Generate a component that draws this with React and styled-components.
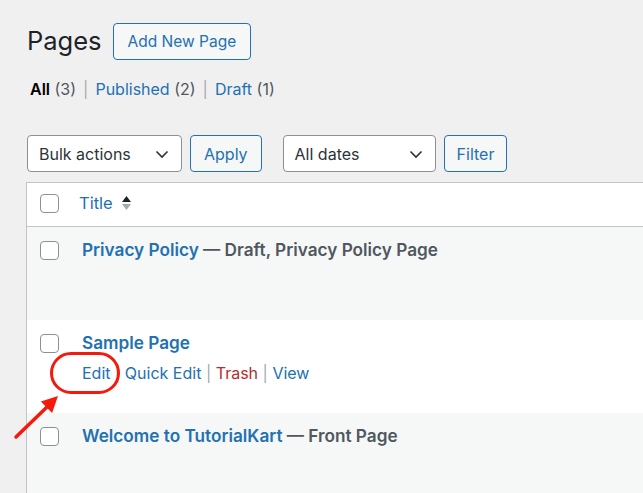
import React from 'react';
import styled, { createGlobalStyle } from 'styled-components';

const GlobalStyle = createGlobalStyle`
  html, body {
    margin: 0;
    padding: 0;
    background: #f0f0f1;
    overflow: hidden;
  }
  body {
    font-family: Inter, "Liberation Sans", sans-serif;
    color: #3c434a;
  }
`;

const Page = styled.div`
  width: 643px;
  height: 493px;
  overflow: hidden;
  padding: 22px 0 0 27px;
  box-sizing: border-box;
`;

const Header = styled.div`
  display: flex;
  align-items: center;
  gap: 11px;
`;

const Heading = styled.h1`
  margin: 0;
  font-size: 25.5px;
  font-weight: 400;
  color: #1d2327;
  line-height: 38px;
`;

const OutlineButton = styled.button`
  font-family: inherit;
  font-size: ${({ size }) => size || 16}px;
  color: #2271b1;
  background: #f6f7f7;
  border: 1px solid #2271b1;
  border-radius: 4px;
  height: 37px;
  padding: 0 ${({ pad }) => pad || 12}px;
  cursor: pointer;
`;

const Views = styled.ul`
  display: flex;
  list-style: none;
  margin: 19px 0 0 3px;
  padding: 0;
  font-size: 16px;
  color: #50575e;
`;

const ViewItem = styled.li`
  a {
    color: ${({ current }) => (current ? '#000' : '#2271b1')};
    font-weight: ${({ current }) => (current ? 600 : 400)};
    text-decoration: none;
  }
`;

const Sep = styled.span`
  color: #a7aaad;
  margin: 0 7px;
`;

const TableNav = styled.div`
  display: flex;
  align-items: center;
  margin-top: 36px;
`;

const Group = styled.div`
  display: flex;
  gap: 8px;
  margin-right: 21px;
`;

const Select = styled.div`
  width: ${({ w }) => w}px;
  height: 37px;
  box-sizing: border-box;
  border: 1px solid #8c8f94;
  border-radius: 4px;
  background: #fff;
  display: flex;
  align-items: center;
  justify-content: space-between;
  padding: 0 11px 0 11px;
  font-size: 16px;
  color: #2c3338;
`;

const Table = styled.div`
  width: 700px;
  margin: 10px 0 0 -1px;
  border: 1px solid #c3c4c7;
  background: #fff;
`;

const HeadRow = styled.div`
  display: flex;
  align-items: center;
  height: 44px;
  padding-bottom: 3px;
  box-sizing: border-box;
  border-bottom: 1px solid #c3c4c7;
  background: #fff;
`;

const Row = styled.div`
  position: relative;
  display: flex;
  align-items: flex-start;
  height: ${({ h }) => h}px;
  background: ${({ striped }) => (striped ? '#f6f7f7' : '#fff')};
  box-sizing: border-box;
  padding-top: 14px;
`;

const CheckCell = styled.div`
  width: 55px;
  padding-left: 13px;
  box-sizing: border-box;
  flex: none;
`;

const Checkbox = styled.span`
  display: block;
  width: 19px;
  height: 19px;
  box-sizing: border-box;
  border: 1px solid #8c8f94;
  border-radius: 4px;
  background: #fff;
`;

const SortLink = styled.a`
  display: flex;
  align-items: center;
  gap: 8px;
  color: #2271b1;
  font-size: 16.5px;
  margin-left: -3px;
`;

const TitleCell = styled.div`
  margin-top: -1px;
`;

const RowTitle = styled.div`
  font-size: 17.2px;
  font-weight: 600;
  color: #50575e;
  line-height: 20px;
  a {
    color: #2271b1;
    text-decoration: none;
  }
`;

const Actions = styled.div`
  margin-top: 10px;
  font-size: 16px;
  color: #a7aaad;
  a {
    color: #2271b1;
    text-decoration: none;
  }
  a.trash {
    color: #b32d2e;
  }
`;

const Circle = styled.div`
  position: absolute;
  left: 23px;
  top: 32px;
  width: 70px;
  height: 42px;
  box-sizing: border-box;
  border: 3px solid #f41a0c;
  border-radius: 21px;
  z-index: 2;
`;

const Arrow = styled.svg`
  position: absolute;
  left: -27px;
  top: 65px;
  z-index: 2;
`;

const Chevron = () => (
  <svg width="16" height="16" viewBox="0 0 16 16">
    <path d="M2.5 5.5 L8 11 L13.5 5.5" fill="none" stroke="#2c3338" strokeWidth="1.6" />
  </svg>
);

const SortIcon = () => (
  <svg width="11" height="18" viewBox="0 0 11 18">
    <path d="M5.5 2 L10 8 L1 8 Z" fill="#1d2327" />
    <path d="M1 10 L10 10 L5.5 16 Z" fill="#a7aaad" />
  </svg>
);

export default function App() {
  return (
    <Page>
      <GlobalStyle />
      <Header>
        <Heading>Pages</Heading>
        <OutlineButton pad={14} size={15.5}>Add New Page</OutlineButton>
      </Header>
      <Views>
        <ViewItem current><a>All</a> (3)<Sep>|</Sep></ViewItem>
        <ViewItem><a>Published</a> (2)<Sep>|</Sep></ViewItem>
        <ViewItem><a>Draft</a> (1)</ViewItem>
      </Views>
      <TableNav>
        <Group>
          <Select w={155}>Bulk actions <Chevron /></Select>
          <OutlineButton pad={13}>Apply</OutlineButton>
        </Group>
        <Group>
          <Select w={153}>All dates <Chevron /></Select>
          <OutlineButton pad={12}>Filter</OutlineButton>
        </Group>
      </TableNav>
      <Table>
        <HeadRow>
          <CheckCell><Checkbox /></CheckCell>
          <SortLink>Title <SortIcon /></SortLink>
        </HeadRow>
        <Row striped h={93}>
          <CheckCell><Checkbox /></CheckCell>
          <TitleCell>
            <RowTitle><a>Privacy Policy</a> — Draft, Privacy Policy Page</RowTitle>
          </TitleCell>
        </Row>
        <Row h={93}>
          <CheckCell><Checkbox /></CheckCell>
          <TitleCell>
            <RowTitle><a>Sample Page</a></RowTitle>
            <Actions>
              <a>Edit</a> | <a>Quick Edit</a> | <a className="trash">Trash</a> | <a>View</a>
            </Actions>
          </TitleCell>
          <Circle />
          <Arrow width="70" height="60" viewBox="0 0 70 60">
            <line x1="16" y1="52" x2="47" y2="22" stroke="#f41a0c" strokeWidth="3.5" strokeLinecap="round" />
            <path d="M58 11 L52.1 27.9 L40.9 16.5 Z" fill="#f41a0c" />
          </Arrow>
        </Row>
        <Row striped h={90}>
          <CheckCell><Checkbox /></CheckCell>
          <TitleCell>
            <RowTitle><a>Welcome to TutorialKart</a> — Front Page</RowTitle>
          </TitleCell>
        </Row>
      </Table>
    </Page>
  );
}
